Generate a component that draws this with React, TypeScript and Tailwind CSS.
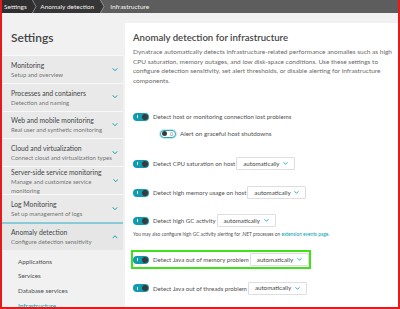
const font = { fontFamily: 'Lato, "Open Sans", sans-serif' };

const groups = [
  { title: 'Monitoring', sub: 'Setup and overview' },
  { title: 'Processes and containers', sub: 'Detection and naming' },
  { title: 'Web and mobile monitoring', sub: 'Real user and synthetic monitoring' },
  { title: 'Cloud and virtualization', sub: 'Connect cloud and virtualization types' },
  { title: 'Server-side service monitoring', sub: 'Manage and customize service monitoring' },
  { title: 'Log Monitoring', sub: 'Set up management of logs' },
];

const anomalyLinks = ['Applications', 'Services', 'Database services', 'Infrastructure'];

function Chevron({ up = false, className = '' }: { up?: boolean; className?: string }) {
  return (
    <svg viewBox="0 0 6 4" className={className} fill="none" stroke="#00a1b2" strokeWidth="1.1" strokeLinecap="round" strokeLinejoin="round">
      <polyline points={up ? '0.7,3.3 3,0.9 5.3,3.3' : '0.7,0.7 3,3.1 5.3,0.7'} />
    </svg>
  );
}

function Crumb({ label, bg, next, pad }: { label: string; bg: string; next: string; pad: string }) {
  return (
    <div className="flex h-full">
      <div className={`flex items-center ${pad}`} style={{ backgroundColor: bg }}>
        {label}
      </div>
      <svg viewBox="0 0 5 13" className="h-[13px] w-[5px]" style={{ backgroundColor: next }}>
        <polygon points="0,0 3.6,6.5 0,13" fill={bg} />
        <polyline points="0.4,0 4,6.5 0.4,13" fill="none" stroke="#a8a8a8" strokeWidth="0.7" />
      </svg>
    </div>
  );
}

function ToggleOn() {
  return (
    <span className="relative inline-block h-[8px] w-[16px] shrink-0 rounded-full bg-[#0f9cae]">
      <span className="absolute left-[4px] top-[2.5px] h-[3px] w-[1px] bg-white" />
      <span className="absolute right-[1px] top-[1px] h-[6px] w-[6px] rounded-full bg-[#3a3a3a]" />
    </span>
  );
}

function ToggleOff() {
  return (
    <span className="relative inline-block h-[8px] w-[16px] shrink-0 rounded-full border border-[#2aa9b9] bg-white ring-1 ring-[#c6e9ee]">
      <span className="absolute left-[1px] top-[0.5px] h-[5px] w-[5px] rounded-full bg-[#3a3a3a]" />
      <span className="absolute right-[2px] top-[-1px] text-[5px] leading-[8px] text-[#777]">0</span>
    </span>
  );
}

function Select() {
  return (
    <span className="inline-flex h-[13px] w-[59px] shrink-0 items-center justify-between rounded-[1px] border border-[#dedede] bg-white pl-[6px] pr-[6px] text-[6.2px] text-[#454646]">
      automatically
      <Chevron className="h-[3px] w-[5px]" />
    </span>
  );
}

function Row({ label, select = true }: { label: string; select?: boolean }) {
  return (
    <div className="flex items-center gap-[4px] text-[6.1px] text-[#505050]">
      <ToggleOn />
      <span className="-mr-[3px]">{label}</span>
      {select && <Select />}
    </div>
  );
}

export default function App() {
  return (
    <div style={font} className="flex h-[309px] w-[400px] flex-col overflow-hidden border-x-2 border-b-2 border-[#e31b1c] bg-[#f1f1f1]">
      <div className="flex h-[13px] shrink-0 bg-[#5d5d5d] text-[6.5px] text-[#f2f2f2]">
        <Crumb label="Settings" bg="#2f2f2f" next="#363636" pad="pl-[2px] pr-[5px]" />
        <Crumb label="Anomaly detection" bg="#363636" next="#5d5d5d" pad="pl-[3.5px] pr-[6px]" />
        <div className="flex items-center pl-[5px]">Infrastructure</div>
      </div>

      <div className="flex flex-1 pt-[10px]">
        <aside className="w-[121px] shrink-0">
          <h1 className="h-[32px] pl-[9px] pt-[7px] text-[12px] font-semibold leading-[16px] text-[#454646]">Settings</h1>
          {groups.map((g) => (
            <div key={g.title} className="flex h-[27.8px] items-center justify-between border-t border-[#f8f8f8] bg-[#e9e9e9] pl-[9px] pr-[5px]">
              <div>
                <div className="text-[6.8px] leading-[10px] text-[#454646]">{g.title}</div>
                <div className="text-[6px] leading-[9px] text-[#757575]">{g.sub}</div>
              </div>
              <Chevron className="h-[3.5px] w-[6px]" />
            </div>
          ))}
          <div className="flex h-[28px] items-center justify-between border-t-2 border-[#86cbd5] bg-[#e6e6e6] pl-[9px] pr-[5px]">
            <div>
              <div className="text-[6.8px] leading-[10px] text-[#454646]">Anomaly detection</div>
              <div className="text-[6px] leading-[9px] text-[#757575]">Configure detection sensitivity</div>
            </div>
            <Chevron up className="h-[3.5px] w-[6px]" />
          </div>
          <ul className="bg-[#f1f1f1] pl-[16px] pt-[5px]">
            {anomalyLinks.map((l) => (
              <li key={l} className={`h-[14.7px] text-[6.3px] leading-[14.7px] ${l === 'Infrastructure' ? 'font-medium text-[#00a1b2]' : 'text-[#505050]'}`}>
                {l}
              </li>
            ))}
          </ul>
        </aside>

        <main className="ml-[2px] flex-1 bg-white pl-[8px] pt-[9px]">
          <h2 className="text-[9.6px] font-semibold leading-[12px] text-[#454646]">Anomaly detection for infrastructure</h2>
          <p className="mt-[3px] pr-[6px] text-[6.5px] leading-[9.5px] text-[#6a6a6a]">
            Dynatrace automatically detects infrastructure-related performance anomalies such as high CPU saturation, memory outages, and low disk-space conditions. Use these settings to configure detection sensitivity, set alert thresholds, or disable alerting for infrastructure components.
          </p>

          <div className="mt-[27px] flex h-[10px] items-center">
            <Row label="Detect host or monitoring connection lost problems" select={false} />
          </div>
          <div className="ml-[27px] mt-[6.5px] flex h-[10px] items-center gap-[4px] text-[6.3px] text-[#505050]">
            <ToggleOff />
            <span>Alert on graceful host shutdowns</span>
          </div>

          <div className="mt-[18.5px]">
            <Row label="Detect CPU saturation on host" />
          </div>
          <div className="mt-[16px]">
            <Row label="Detect high memory usage on host" />
          </div>
          <div className="mt-[15.4px]">
            <Row label="Detect high GC activity" />
          </div>
          <p className="mt-[4px] text-[4.8px] leading-[6px] text-[#555]">
            You may also configure high GC activity alerting for .NET processes on <span className="text-[#00a1b2]">extension events page.</span>
          </p>

          <div className="-ml-[2px] mt-[12.7px] inline-flex border-2 border-[#3ee21c] py-[1px]">
            <Row label="Detect Java out of memory problem" />
          </div>
          <div className="mt-[12px]">
            <Row label="Detect Java out of threads problem" />
          </div>
        </main>
      </div>
    </div>
  );
}
